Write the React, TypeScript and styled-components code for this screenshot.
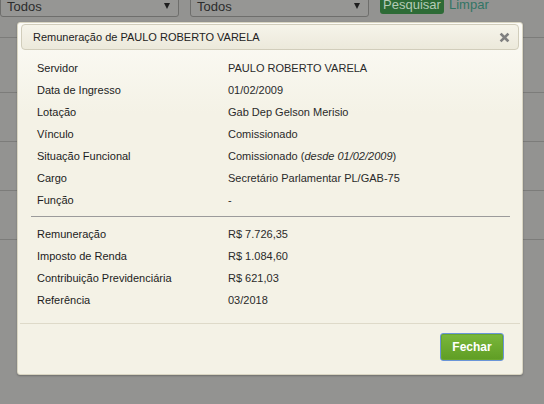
import React from "react";
import styled, { createGlobalStyle } from "styled-components";

const GlobalStyle = createGlobalStyle`
  html, body {
    margin: 0;
    padding: 0;
    background: #939391;
    font-family: "Liberation Sans", Arial, sans-serif;
    overflow: hidden;
  }
`;

// Page behind the modal (already dimmed by the overlay)
const Page = styled.div`
  position: relative;
  width: 544px;
  height: 404px;
  overflow: hidden;
`;

const FilterBar = styled.div`
  display: flex;
  align-items: flex-start;
  margin-top: -12px;
  height: 49px;
`;

const Select = styled.div<{ $gap?: number }>`
  display: flex;
  align-items: center;
  justify-content: space-between;
  box-sizing: border-box;
  width: 179px;
  height: 29px;
  margin-left: ${(p) => p.$gap ?? 0}px;
  padding: 7px 8px 0 6px;
  border: 1px solid #6e6e6c;
  border-radius: 3px;
  background: #969694;
  color: #2c2c2c;
  font-size: 13px;
`;

const Caret = styled.span`
  width: 0;
  height: 0;
  border-left: 3px solid transparent;
  border-right: 3px solid transparent;
  border-top: 6px solid #1e1e1e;
`;

const SearchButton = styled.div`
  margin-left: 11px;
  width: 64px;
  height: 26px;
  padding: 8px 0 0;
  box-sizing: border-box;
  border-radius: 3px;
  background: #2d6b36;
  color: #b4cbb6;
  font-size: 13px;
  line-height: 17px;
  text-align: center;
`;

const ClearLink = styled.span`
  margin-left: 5px;
  padding-top: 8px;
  color: #327565;
  font-size: 13px;
  line-height: 17px;
`;

const TableRow = styled.div<{ $height: number }>`
  height: ${(p) => p.$height}px;
  border-top: 1px solid #7c7c7a;
  box-sizing: border-box;
`;

// Modal
const Dialog = styled.div`
  position: absolute;
  left: 17px;
  top: 22px;
  width: 506px;
  height: 353px;
  box-sizing: border-box;
  display: flex;
  flex-direction: column;
  padding: 1px 3px 0;
  border: 1px solid #d9d5c2;
  border-radius: 3px;
  background: linear-gradient(#fcfbf6 0px, #f4f2e6 90px);
  box-shadow: 0 1px 2px rgba(0, 0, 0, 0.25);
  color: #222;
  font-size: 11px;
`;

const TitleBar = styled.div`
  display: flex;
  align-items: center;
  justify-content: space-between;
  height: 26px;
  box-sizing: border-box;
  padding: 0 8px 0 11px;
  border: 1px solid #d1cdbb;
  border-radius: 4px;
  background: linear-gradient(#f6f4ea, #ece9db);
  color: #222;
`;

const Title = styled.span`
  font-size: 11px;
`;

const CloseButton = styled.svg`
  width: 11px;
  height: 11px;
`;

const Body = styled.div`
  flex: 1;
  padding: 7px 9px 0 10px;
`;

const Row = styled.div`
  display: grid;
  grid-template-columns: 191px 1fr;
  height: 22px;
  line-height: 22px;
  padding-left: 6px;
`;

const Label = styled.span`
  color: #1c1c1c;
`;

const Value = styled.span`
  color: #2a2a2a;
`;

const Divider = styled.hr`
  margin: 5px 0 6px;
  border: 0;
  border-top: 1px solid #9b9b9b;
`;

const Footer = styled.div`
  display: flex;
  justify-content: flex-end;
  height: 51px;
  box-sizing: border-box;
  margin: 0 -1px;
  padding: 9px 16px 0 0;
  border-top: 1px solid #dedac9;
`;

const Button = styled.button`
  width: 64px;
  height: 28px;
  box-sizing: border-box;
  border: 1px solid #6a95d8;
  border-radius: 3px;
  background: linear-gradient(#7ab83b, #5f9d24);
  box-shadow: inset 0 0 0 1px #6aa72e;
  color: #fff;
  font-family: "Liberation Sans", Arial, sans-serif;
  font-size: 12px;
  font-weight: bold;
  cursor: pointer;
`;

const personal: [string, React.ReactNode][] = [
  ["Servidor", "PAULO ROBERTO VARELA"],
  ["Data de Ingresso", "01/02/2009"],
  ["Lotação", "Gab Dep Gelson Merisio"],
  ["Vínculo", "Comissionado"],
  [
    "Situação Funcional",
    <>
      Comissionado (<i>desde 01/02/2009</i>)
    </>,
  ],
  ["Cargo", "Secretário Parlamentar PL/GAB-75"],
  ["Função", "-"],
];

const payment: [string, string][] = [
  ["Remuneração", "R$ 7.726,35"],
  ["Imposto de Renda", "R$ 1.084,60"],
  ["Contribuição Previdenciária", "R$ 621,03"],
  ["Referência", "03/2018"],
];

const App: React.FC = () => {
  return (
    <Page>
      <GlobalStyle />
      <FilterBar>
        <Select>
          Todos <Caret />
        </Select>
        <Select $gap={11}>
          Todos <Caret />
        </Select>
        <SearchButton>Pesquisar</SearchButton>
        <ClearLink>Limpar</ClearLink>
      </FilterBar>
      <TableRow $height={55} />
      <TableRow $height={49} />
      <TableRow $height={49} />
      <TableRow $height={49} />
      <TableRow $height={49} />

      <Dialog>
        <TitleBar>
          <Title>Remuneração de PAULO ROBERTO VARELA</Title>
          <CloseButton viewBox="0 0 11 11">
            <path
              d="M2.5 2.5 L8.5 8.5 M8.5 2.5 L2.5 8.5"
              stroke="#808080"
              strokeWidth="2.6"
              strokeLinecap="square"
            />
          </CloseButton>
        </TitleBar>
        <Body>
          {personal.map(([label, value]) => (
            <Row key={label}>
              <Label>{label}</Label>
              <Value>{value}</Value>
            </Row>
          ))}
          <Divider />
          {payment.map(([label, value]) => (
            <Row key={label}>
              <Label>{label}</Label>
              <Value>{value}</Value>
            </Row>
          ))}
        </Body>
        <Footer>
          <Button>Fechar</Button>
        </Footer>
      </Dialog>
    </Page>
  );
};

export default App;
